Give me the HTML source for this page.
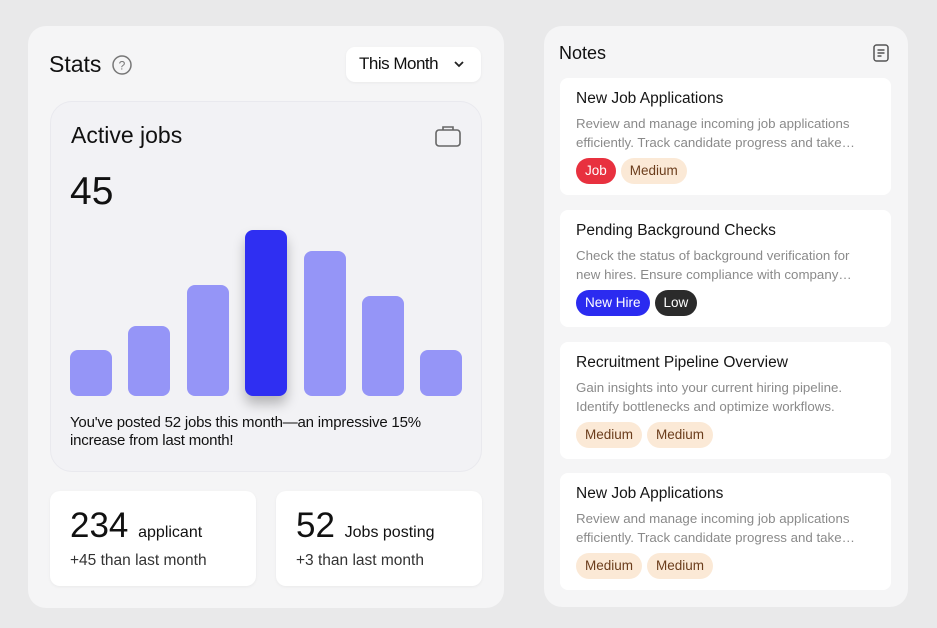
<!DOCTYPE html><html><head><style>
*{box-sizing:border-box;margin:0;padding:0}
body{width:937px;height:628px;background:#e9e9ea;font-family:"Liberation Sans",sans-serif;color:#111;position:relative;overflow:hidden}
.abs{position:absolute}
.panel{position:absolute;background:#f5f5f6;border-radius:18px}
.card{position:absolute;background:#fff;border-radius:10px;box-shadow:0 1px 3px rgba(0,0,0,.05)}
.bar{position:absolute;background:#9595f7;border-radius:8px;width:42px;bottom:0}
.note{position:absolute;left:560px;width:331px;height:117px;background:#fff;border-radius:8px;padding:12px 16px}
.note h3{font-weight:normal;font-size:15.5px;color:#151515;margin-bottom:6px}
.note p{font-size:13.3px;color:#8a8a8a;line-height:19px}
.tags{margin-top:6px;display:flex;gap:5px}
.tag{font-size:13.5px;padding:5px 9px;border-radius:13px;line-height:16px}
.med{background:#fbe9d6;color:#6b3d1c}
</style></head><body>
<div class="panel" style="left:28px;top:26px;width:476px;height:582px"></div>
<div class="abs" style="left:49px;top:51px;font-size:23px">Stats</div>
<svg class="abs" style="left:111px;top:54px" width="22" height="22" viewBox="0 0 22 22"><circle cx="11" cy="11" r="9" fill="none" stroke="#777" stroke-width="1.5"/><text x="11" y="15.5" text-anchor="middle" font-size="12" fill="#777" font-family="Liberation Sans">?</text></svg>
<div class="card" style="left:346px;top:47px;width:135px;height:35px;border-radius:9px"></div>
<div class="abs" style="left:359px;top:54px;font-size:17px;letter-spacing:-.5px">This Month</div>
<svg class="abs" style="left:453px;top:59px" width="12" height="10"><path d="M2 3l4 4 4-4" fill="none" stroke="#222" stroke-width="1.8"/></svg>
<div class="abs" style="left:50px;top:101px;width:432px;height:371px;background:#f2f2f5;border-radius:22px;border:1px solid #e9e9ee"></div>
<div class="abs" style="left:71px;top:122px;font-size:23px">Active jobs</div>
<svg class="abs" style="left:434px;top:123px" width="28" height="26" viewBox="0 0 28 26"><rect x="2" y="7" width="24" height="16" rx="3" fill="none" stroke="#666" stroke-width="1.6"/><path d="M9 7V4h10v3" fill="none" stroke="#666" stroke-width="1.6"/></svg>
<div class="abs" style="left:70px;top:170px;font-size:39px">45</div>
<div class="abs" style="left:70px;top:0;width:392px;height:396px">
<div class="bar" style="left:0;height:46px"></div>
<div class="bar" style="left:58px;height:70px"></div>
<div class="bar" style="left:117px;height:111px"></div>
<div class="bar" style="left:175px;height:166px;background:#2f2ff2;box-shadow:0 8px 12px rgba(0,0,0,.25)"></div>
<div class="bar" style="left:234px;height:145px"></div>
<div class="bar" style="left:292px;height:100px"></div>
<div class="bar" style="left:350px;height:46px"></div>
</div>
<div class="abs" style="left:70px;top:414px;font-size:15px;line-height:18px;width:400px;letter-spacing:-.2px">You've posted 52 jobs this month—an impressive 15% increase from last month!</div>
<div class="card" style="left:50px;top:491px;width:206px;height:95px"></div>
<div class="abs" style="left:70px;top:506px;font-size:35px">234 <span style="font-size:16px">applicant</span></div>
<div class="abs" style="left:70px;top:552px;font-size:15.5px;color:#333">+45 than last month</div>
<div class="card" style="left:276px;top:491px;width:206px;height:95px"></div>
<div class="abs" style="left:296px;top:506px;font-size:35px">52 <span style="font-size:16px">Jobs posting</span></div>
<div class="abs" style="left:296px;top:552px;font-size:15.5px;color:#333">+3 than last month</div>

<div class="panel" style="left:544px;top:26px;width:364px;height:581px"></div>
<div class="abs" style="left:559px;top:43px;font-size:18px">Notes</div>
<svg class="abs" style="left:872px;top:43px" width="18" height="20" viewBox="0 0 18 20"><rect x="2" y="2" width="14" height="16" rx="2.5" fill="none" stroke="#555" stroke-width="1.5"/><path d="M5.5 7h7M5.5 10h7M5.5 13h4" stroke="#555" stroke-width="1.4"/></svg>
<div class="note" style="top:78px"><h3>New Job Applications</h3><p>Review and manage incoming job applications efficiently. Track candidate progress and take…</p><div class="tags"><span class="tag" style="background:#e8313f;color:#fff">Job</span><span class="tag med">Medium</span></div></div>
<div class="note" style="top:210px"><h3>Pending Background Checks</h3><p>Check the status of background verification for new hires. Ensure compliance with company…</p><div class="tags"><span class="tag" style="background:#2b2bf0;color:#fff">New Hire</span><span class="tag" style="background:#2b2b2b;color:#fff">Low</span></div></div>
<div class="note" style="top:342px"><h3>Recruitment Pipeline Overview</h3><p>Gain insights into your current hiring pipeline. Identify bottlenecks and optimize workflows.</p><div class="tags"><span class="tag med">Medium</span><span class="tag med">Medium</span></div></div>
<div class="note" style="top:473px"><h3>New Job Applications</h3><p>Review and manage incoming job applications efficiently. Track candidate progress and take…</p><div class="tags"><span class="tag med">Medium</span><span class="tag med">Medium</span></div></div>
</body></html>
